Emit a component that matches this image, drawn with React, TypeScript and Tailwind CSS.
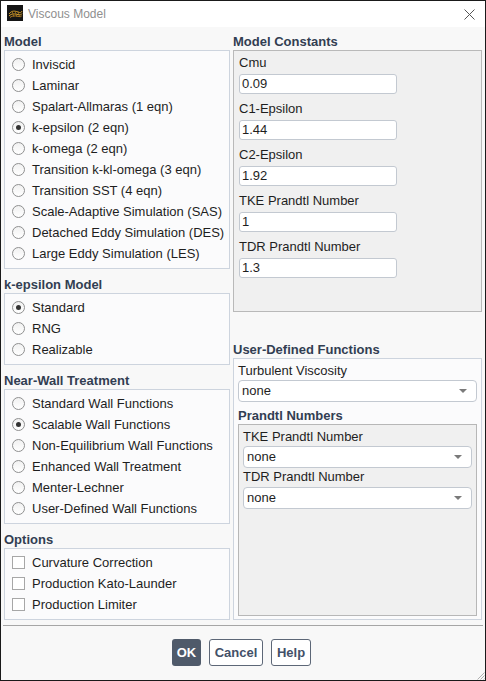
import React from "react";

const Radio = ({ checked }: { checked?: boolean }) => (
  <span className="w-[13px] h-[13px] rounded-full border border-[#8f9090] bg-gradient-to-b from-[#f1f1f1] to-white flex items-center justify-center shrink-0">
    {checked && <span className="w-[5px] h-[5px] rounded-full bg-[#333333]" />}
  </span>
);

const Check = () => (
  <span className="w-[13px] h-[13px] border border-[#a7a7a7] bg-white shrink-0" />
);

const RadioRow = ({ label, checked }: { label: string; checked?: boolean }) => (
  <div className="h-[21px] flex items-center gap-[7px] pl-[7px] whitespace-nowrap">
    <Radio checked={checked} />
    <span>{label}</span>
  </div>
);

const CheckRow = ({ label }: { label: string }) => (
  <div className="h-[21px] flex items-center gap-[7px] pl-[7px] whitespace-nowrap">
    <Check />
    <span>{label}</span>
  </div>
);

const Heading = ({ children, className = "" }: { children: React.ReactNode; className?: string }) => (
  <div className={`h-[17px] leading-[17px] font-bold text-[13px] text-[#323e52] whitespace-nowrap ${className}`}>{children}</div>
);

const Group = ({ children }: { children: React.ReactNode }) => (
  <div className="border border-[#cdd4de] bg-[#fbfbfc] pt-[3px] pb-[4px]">{children}</div>
);

const Field = ({ label, value }: { label: string; value: string }) => (
  <div className="mb-[6px]">
    <div className="h-[18px] leading-[18px]">{label}</div>
    <div className="mt-[2px] h-[20px] w-[158px] rounded-[3px] border border-[#c3c9d1] bg-white flex items-center pl-[2px]">
      {value}
    </div>
  </div>
);

const Select = ({ className = "" }: { className?: string }) => (
  <div className={`h-[22px] rounded-[4px] border border-[#c3c9d1] bg-white flex items-center justify-between pl-[3px] pr-[9px] ${className}`}>
    <span>none</span>
    <svg width="8" height="4" viewBox="0 0 8 4">
      <path d="M0 0H8L4 4Z" fill="#7a7a7a" />
    </svg>
  </div>
);

export default function App() {
  return (
    <div className="w-[486px] h-[681px] border border-[#1a1a1a] bg-[#f8f8f8] flex flex-col relative font-['Liberation_Sans',Arial,sans-serif] text-[13px] text-[#1e1e1e] overflow-hidden">
      {/* Title bar */}
      <div className="h-[26px] bg-white flex items-center pl-[6px] pr-[10px] shrink-0">
        <svg width="16" height="16" viewBox="0 0 16 16" className="mb-[3px]">
          <rect width="16" height="16" fill="#151515" />
          <path d="M2 9 C5 5, 8 6, 11 7 S14 8, 15 6" stroke="#c8962a" strokeWidth="1" fill="none" />
          <path d="M2 11 C5 8, 8 9, 11 9.5 S14 10, 15 8.5" stroke="#e0a830" strokeWidth="1" fill="none" />
          <path d="M3 12.5 C6 10, 9 11, 12 11.5 S14 11, 15 10.5" stroke="#b07a20" strokeWidth="1" fill="none" />
          <path d="M5 6 L7 12 M8 6 L10 12 M11 6.5 L12.5 11.5" stroke="#a8781e" strokeWidth="0.8" fill="none" />
        </svg>
        <span className="ml-[5px] text-[12px] text-[#8f8f8f]">Viscous Model</span>
        <div className="flex-1" />
        <svg width="11" height="11" viewBox="0 0 11 11">
          <path d="M0.5 0.5L10.5 10.5M10.5 0.5L0.5 10.5" stroke="#555" strokeWidth="1" />
        </svg>
      </div>

      {/* Body */}
      <div className="flex gap-[3px] px-[3px] pt-[6px]">
        {/* Left column */}
        <div className="w-[226px] flex flex-col">
          <Heading>Model</Heading>
          <Group>
            <RadioRow label="Inviscid" />
            <RadioRow label="Laminar" />
            <RadioRow label="Spalart-Allmaras (1 eqn)" />
            <RadioRow label="k-epsilon (2 eqn)" checked />
            <RadioRow label="k-omega (2 eqn)" />
            <RadioRow label="Transition k-kl-omega (3 eqn)" />
            <RadioRow label="Transition SST (4 eqn)" />
            <RadioRow label="Scale-Adaptive Simulation (SAS)" />
            <RadioRow label="Detached Eddy Simulation (DES)" />
            <RadioRow label="Large Eddy Simulation (LES)" />
          </Group>

          <Heading className="mt-[7px]">k-epsilon Model</Heading>
          <Group>
            <RadioRow label="Standard" checked />
            <RadioRow label="RNG" />
            <RadioRow label="Realizable" />
          </Group>

          <Heading className="mt-[7px]">Near-Wall Treatment</Heading>
          <Group>
            <RadioRow label="Standard Wall Functions" />
            <RadioRow label="Scalable Wall Functions" checked />
            <RadioRow label="Non-Equilibrium Wall Functions" />
            <RadioRow label="Enhanced Wall Treatment" />
            <RadioRow label="Menter-Lechner" />
            <RadioRow label="User-Defined Wall Functions" />
          </Group>

          <Heading className="mt-[7px]">Options</Heading>
          <Group>
            <CheckRow label="Curvature Correction" />
            <CheckRow label="Production Kato-Launder" />
            <CheckRow label="Production Limiter" />
          </Group>
        </div>

        {/* Right column */}
        <div className="w-[249px] flex flex-col">
          <Heading>Model Constants</Heading>
          <div className="h-[262px] border border-[#b9b9b9] bg-[#f0f0f0] pt-[3px] pl-[5px]">
            <Field label="Cmu" value="0.09" />
            <Field label="C1-Epsilon" value="1.44" />
            <Field label="C2-Epsilon" value="1.92" />
            <Field label="TKE Prandtl Number" value="1" />
            <Field label="TDR Prandtl Number" value="1.3" />
          </div>

          <Heading className="mt-[29px]">User-Defined Functions</Heading>
          <div className="h-[262px] border border-[#cdd4de] bg-[#fbfbfc] pt-[3px] px-[4px] flex flex-col">
            <div className="h-[18px] leading-[18px]">Turbulent Viscosity</div>
            <Select />
            <Heading className="mt-[5px]">Prandtl Numbers</Heading>
            <div className="h-[192px] border border-[#b7b7b7] bg-[#f0f0f0] pt-[3px] px-[4px]">
              <div className="h-[18px] leading-[18px]">TKE Prandtl Number</div>
              <Select />
              <div className="h-[18px] leading-[18px]">TDR Prandtl Number</div>
              <Select className="mt-px" />
            </div>
          </div>
        </div>
      </div>

      {/* Separator */}
      <div className="mx-[2px] mt-[5px] h-px bg-[#a6a6a6]" />

      {/* Buttons */}
      <div className="flex justify-center gap-[8px] mt-[13px] pr-[3px]">
        <div className="w-[29px] h-[27px] rounded-[3px] bg-[#4f5a6a] text-white font-bold flex items-center justify-center">OK</div>
        <div className="w-[54px] h-[27px] rounded-[3px] border border-[#5d6777] bg-white text-[#435068] font-bold flex items-center justify-center">Cancel</div>
        <div className="w-[40px] h-[27px] rounded-[3px] border border-[#5d6777] bg-white text-[#435068] font-bold flex items-center justify-center">Help</div>
      </div>

      {/* Resize grip */}
      <svg width="10" height="10" viewBox="0 0 10 10" className="absolute right-0 bottom-0">
        <path d="M9.5 2.5L2.5 9.5M9.5 5.5L5.5 9.5M9.5 8.5L8.5 9.5" stroke="#b0b0b0" strokeWidth="1" />
      </svg>
    </div>
  );
}
